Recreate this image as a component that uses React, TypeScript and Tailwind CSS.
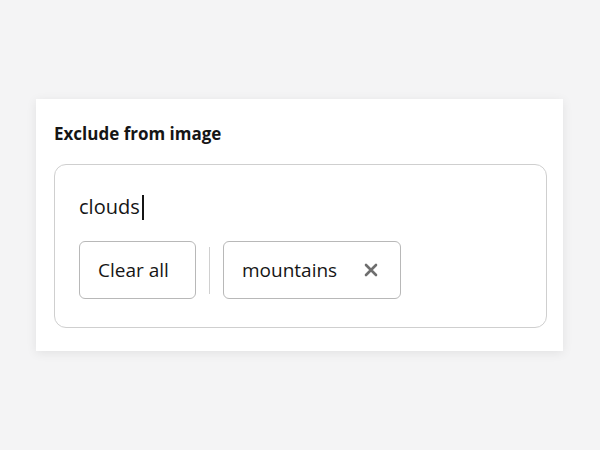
export default function App() {
  return (
    <div
      className="w-[600px] h-[450px] bg-[#f4f4f5] pt-[99px] pl-[36px]"
      style={{ fontFamily: '"Open Sans", "Noto Sans", sans-serif' }}
    >
      <div className="w-[527px] h-[252px] bg-white shadow-[0_2px_10px_rgba(0,0,0,0.08)] pl-[18px] pr-[16px] pt-[24px]">
        <h2 className="text-[17px] leading-[22px] font-bold text-[#151515]">Exclude from image</h2>
        <div className="mt-[19px] h-[164px] border border-[#cfcfcf] rounded-[12px] pl-[24px] pr-[24px] pt-[29px]">
          <div className="flex items-center h-[26px] text-[20px] text-[#151515]">
            <span>clouds</span>
            <span className="ml-[2px] w-[2px] h-[25px] bg-[#151515]" />
          </div>
          <div className="mt-[21px] flex items-center">
            <button className="h-[58px] w-[117px] pl-[18px] text-left border border-[#b8b8b8] rounded-[6px] text-[19px] text-[#151515]">
              Clear all
            </button>
            <div className="mx-[13px] w-px h-[47px] bg-[#d0d0d0]" />
            <div className="h-[58px] w-[178px] pl-[18px] pr-[22px] border border-[#b8b8b8] rounded-[6px] flex items-center justify-between text-[19px] text-[#151515]">
              <span>mountains</span>
              <svg width="14" height="14" viewBox="0 0 14 14" className="text-[#6e6e6e]">
                <path d="M2 2 L12 12 M12 2 L2 12" stroke="currentColor" strokeWidth="2.6" strokeLinecap="round" />
              </svg>
            </div>
          </div>
        </div>
      </div>
    </div>
  );
}
